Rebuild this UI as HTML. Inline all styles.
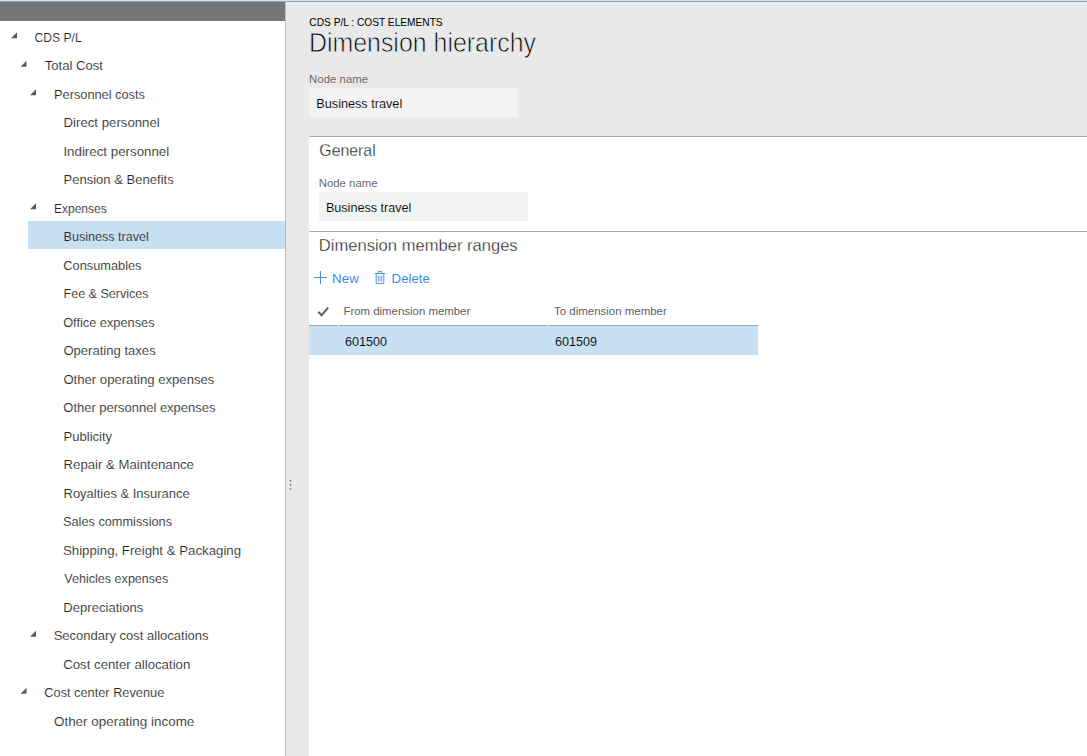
<!DOCTYPE html>
<html lang="en">
<head>
<meta charset="utf-8">
<title>Dimension hierarchy</title>
<style>
html,body{margin:0;padding:0;}
body{width:1087px;height:756px;overflow:hidden;background:#fff;position:relative;font-family:"Liberation Sans", sans-serif;font-size:13.3px;color:#333;-webkit-font-smoothing:antialiased;}
.abs,.t{position:absolute;}
.t{white-space:pre;line-height:20px;height:20px;margin:0;padding:0;font-weight:normal;transform-origin:0 0;}
.tree .t{color:#262626;font-size:13.3px;-webkit-text-stroke:0.14px #fff;}
.tree .t.on{-webkit-text-stroke-color:#c7e0f4;}
.topline{left:0;top:0;width:1087px;height:1px;background:#c7e3fb;}
.topline2{left:0;top:1px;width:1087px;height:1px;background:#a3a3a3;}
.leftbar{left:0;top:2px;width:285px;height:19px;background:#767676;}
.leftpane{left:0;top:21px;width:285px;height:735px;background:#fff;}
.split{left:285px;top:2px;width:1px;height:754px;background:#bdbdbd;}
.right{left:286px;top:2px;width:801px;height:754px;background:#e9e9e9;}
.card{left:309px;top:137px;width:778px;height:619px;background:#fff;}
.hr{left:309px;width:778px;height:1px;background:#a6a6a6;}
.inp{background:#f3f3f3;height:29px;width:209px;}
.sel{background:#c7e0f4;}
.thin{-webkit-text-stroke:0.8px #e9e9e9;}
.thin2{-webkit-text-stroke:0.32px #fff;}
.thin3{-webkit-text-stroke:0.1px #f3f3f3;}
.thin4{-webkit-text-stroke:0.1px #c7e0f4;}
svg{position:absolute;overflow:visible;}
</style>
</head>
<body>
<div class="abs topline"></div>
<div class="abs topline2"></div>
<div class="abs leftbar"></div>
<nav class="tree">
<div class="abs leftpane"></div>
<div class="abs sel" style="left:28px;top:221px;width:257px;height:28px"></div>
<div class="t" id="tree0" style="left:34px;top:28px;transform:translateX(0.43px) scaleX(0.9145);">CDS P/L</div>
<div class="t" id="tree1" style="left:44px;top:56px;transform:translateX(0.80px) scaleX(0.9819);">Total Cost</div>
<div class="t" id="tree2" style="left:54px;top:85px;transform:translateX(0.03px) scaleX(0.9610);">Personnel costs</div>
<div class="t" id="tree3" style="left:63px;top:113px;transform:translateX(0.53px) scaleX(0.9935);">Direct personnel</div>
<div class="t" id="tree4" style="left:63px;top:142px;transform:translateX(0.40px) scaleX(1.0013);">Indirect personnel</div>
<div class="t" id="tree5" style="left:63px;top:170px;transform:translateX(0.44px) scaleX(0.9815);">Pension &amp; Benefits</div>
<div class="t" id="tree6" style="left:53px;top:199px;transform:translateX(0.89px) scaleX(0.9066);">Expenses</div>
<div class="t on" id="tree7" style="left:63px;top:227px;transform:translateX(0.54px) scaleX(0.9463);">Business travel</div>
<div class="t" id="tree8" style="left:63px;top:256px;transform:translateX(0.29px) scaleX(0.9617);">Consumables</div>
<div class="t" id="tree9" style="left:63px;top:284px;transform:translateX(0.58px) scaleX(0.9410);">Fee &amp; Services</div>
<div class="t" id="tree10" style="left:63px;top:313px;transform:translateX(0.13px) scaleX(0.9612);">Office expenses</div>
<div class="t" id="tree11" style="left:63px;top:341px;transform:translateX(0.43px) scaleX(0.9825);">Operating taxes</div>
<div class="t" id="tree12" style="left:63px;top:370px;transform:translateX(0.41px) scaleX(0.9864);">Other operating expenses</div>
<div class="t" id="tree13" style="left:63px;top:398px;transform:translateX(0.29px) scaleX(0.9753);">Other personnel expenses</div>
<div class="t" id="tree14" style="left:63px;top:427px;transform:translateX(0.54px) scaleX(0.9812);">Publicity</div>
<div class="t" id="tree15" style="left:63px;top:455px;transform:translateX(0.54px) scaleX(0.9912);">Repair &amp; Maintenance</div>
<div class="t" id="tree16" style="left:63px;top:484px;transform:translateX(0.54px) scaleX(0.9751);">Royalties &amp; Insurance</div>
<div class="t" id="tree17" style="left:62px;top:512px;transform:translateX(1.00px) scaleX(0.9578);">Sales commissions</div>
<div class="t" id="tree18" style="left:62px;top:541px;transform:translateX(0.97px) scaleX(0.9956);">Shipping, Freight &amp; Packaging</div>
<div class="t" id="tree19" style="left:64px;top:569px;transform:translateX(0.33px) scaleX(0.9448);">Vehicles expenses</div>
<div class="t" id="tree20" style="left:63px;top:598px;transform:translateX(0.37px) scaleX(0.9838);">Depreciations</div>
<div class="t" id="tree21" style="left:53px;top:626px;transform:translateX(0.67px) scaleX(0.9796);">Secondary cost allocations</div>
<div class="t" id="tree22" style="left:63px;top:655px;transform:translateX(0.19px) scaleX(0.9938);">Cost center allocation</div>
<div class="t" id="tree23" style="left:44px;top:683px;transform:translateX(0.31px) scaleX(0.9601);">Cost center Revenue</div>
<div class="t" id="tree24" style="left:53px;top:712px;transform:translateX(0.96px) scaleX(1.0099);">Other operating income</div>
<svg style="left:0;top:0" width="285" height="756" viewBox="0 0 285 756"><path d="M17.0 38.3v-6l-6 6zM26.5 66.8v-6l-6 6zM36.0 95.3v-6l-6 6zM36.0 209.3v-6l-6 6zM36.0 636.8v-6l-6 6zM26.5 693.8v-6l-6 6z" fill="#595959"/></svg>
</nav>
<div class="abs split"></div>
<main>
<div class="abs right"></div>
<svg style="left:286px;top:476px" width="10" height="18" viewBox="0 0 10 18"><path d="M3.8 4h1.4v1.4h-1.4zM3.8 8.1h1.4v1.4h-1.4zM3.8 12.3h1.4v1.4h-1.4z" fill="#6a6a6a"/></svg>
<div class="abs card"></div>
<div class="abs hr" style="top:136px"></div>
<div class="abs hr" style="top:231px"></div>
<div class="abs inp" style="left:309px;top:88px"></div>
<div class="abs inp" style="left:319px;top:192px"></div>
<div class="abs" style="left:309px;top:325px;width:29px;height:1px;background:#a6a6a6"></div>
<div class="abs" style="left:339px;top:325px;width:209px;height:1px;background:#a6a6a6"></div>
<div class="abs" style="left:549px;top:325px;width:209px;height:1px;background:#a6a6a6"></div>
<div class="abs sel" style="left:309px;top:326px;width:449px;height:29px"></div>
<svg style="left:314px;top:271px" width="13" height="13" viewBox="0 0 13 13"><path d="M6.5 0V13M0 6.5H13" stroke="#4a96e0" stroke-width="1" fill="none"/></svg>
<svg style="left:375px;top:271px" width="10" height="13" viewBox="0 0 10 13"><path d="M0 2.5H10M3.2 2.5V0.6H6.8V2.5M1.2 2.5V12.4H8.8V2.5" stroke="#4a96e0" stroke-width="1" fill="none"/><path d="M3.3 4.6V10.4M5 4.6V10.4M6.7 4.6V10.4" stroke="#5a9fe3" stroke-width="0.9" fill="none"/></svg>
<svg style="left:317px;top:306px" width="13" height="11" viewBox="0 0 13 11"><path d="M1.3 5.8L4.6 9.2L11.2 1.6" stroke="#606060" stroke-width="2" fill="none"/></svg>
<div class="t" id="crumb" style="left:309px;top:12px;transform:translateX(0.37px) scaleX(0.8765);font-size:11.6px;color:#000;">CDS P/L : COST ELEMENTS</div>
<h1 class="t thin" id="title" style="left:308px;top:33px;transform:translateX(0.89px) scaleX(0.8901);font-size:28px;color:#000;">Dimension hierarchy</h1>
<label class="t" id="lbl1" style="left:309px;top:69px;transform:translateX(0.12px) scaleX(1.0189);font-size:11.2px;color:#6b6b6b;">Node name</label>
<div class="t thin3" id="val1" style="left:316px;top:94px;transform:translateX(0.30px) scaleX(0.9526);color:#000;">Business travel</div>
<h2 class="t thin2" id="h1" style="left:319px;top:141px;transform:translateX(0.32px) scaleX(0.9549);font-size:16.6px;color:#1c1c1c;">General</h2>
<label class="t" id="lbl2" style="left:318px;top:173px;transform:translateX(0.69px) scaleX(1.0184);font-size:11.2px;color:#6b6b6b;">Node name</label>
<div class="t thin3" id="val2" style="left:325px;top:198px;transform:translateX(0.92px) scaleX(0.9468);color:#000;">Business travel</div>
<h2 class="t thin2" id="h2" style="left:318px;top:236px;transform:translateX(0.78px) scaleX(0.9983);font-size:16.6px;color:#1c1c1c;">Dimension member ranges</h2>
<div class="t" id="new" style="left:332px;top:269px;transform:translateX(0.10px) scaleX(1.0023);color:#3a8dde;">New</div>
<div class="t" id="del" style="left:391px;top:269px;transform:translateX(0.61px) scaleX(0.9918);color:#3a8dde;">Delete</div>
<div class="t" id="th1" style="left:343px;top:301px;transform:translateX(0.42px) scaleX(1.0201);font-size:11.2px;color:#5e5e5e;">From dimension member</div>
<div class="t" id="th2" style="left:554px;top:301px;transform:translateX(0.01px) scaleX(1.0249);font-size:11.2px;color:#5e5e5e;">To dimension member</div>
<div class="t thin4" id="td1" style="left:344px;top:332px;transform:translateX(0.98px) scaleX(0.9477);color:#000;">601500</div>
<div class="t thin4" id="td2" style="left:555px;top:332px;transform:translateX(0.06px) scaleX(0.9473);color:#000;">601509</div>
</main>
</body>
</html>
